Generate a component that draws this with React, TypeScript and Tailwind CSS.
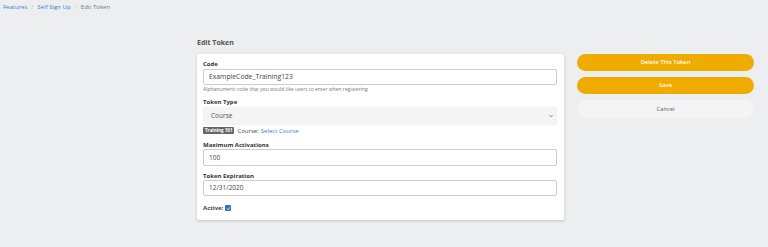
export default function App() {
  return (
    <div className="w-[768px] h-[247px] bg-[#edeef0] font-['Open_Sans',sans-serif] text-[#333] overflow-hidden">
      {/* Breadcrumb */}
      <div className="flex items-center gap-[4px] pl-[3px] pt-[1px] h-[12px] text-[6px] leading-none">
        <span className="text-[#3a7bd5]">Features</span>
        <span className="text-[#bbb]">/</span>
        <span className="text-[#3a7bd5]">Self Sign Up</span>
        <span className="text-[#bbb]">/</span>
        <span className="text-[#777]">Edit Token</span>
      </div>

      <div className="flex pl-[197px] pt-[26px] gap-[13px]">
        {/* Form column */}
        <div className="w-[367px] flex flex-col">
          <h2 className="text-[7px] font-bold text-[#555] leading-none h-[16px] pt-[1px]">Edit Token</h2>
          <div className="bg-white rounded-[2px] shadow-[0_1px_3px_rgba(0,0,0,0.18)] pl-[6px] pr-[7px] pt-[5px] h-[166px]">
            <label className="block text-[6px] font-bold leading-none h-[10px] pt-[2px]">Code</label>
            <div className="h-[16px] border border-[#ccc] rounded-[2px] flex items-center px-[5px] text-[6.8px] text-[#444]">
              ExampleCode_Training123
            </div>
            <p className="text-[5px] text-[#777] leading-none mt-[2px] h-[10px]">
              Alphanumeric code that you would like users to enter when registering
            </p>

            <label className="block text-[6px] font-bold leading-none h-[10px] pt-[2px]">Token Type</label>
            <div className="h-[18px] bg-[#f4f4f4] rounded-[2px] flex items-center justify-between pl-[8px] pr-[3px] text-[6.5px] text-[#555]">
              <span>Course</span>
              <svg width="6" height="6" viewBox="0 0 24 24" fill="none" stroke="#555" strokeWidth="3">
                <path d="M6 9l6 6 6-6" />
              </svg>
            </div>
            <div className="flex items-center gap-[3px] mt-[2px] h-[7px] text-[6px] leading-none">
              <span className="bg-[#666] text-white text-[4.5px] font-bold h-[7px] px-[2px] flex items-center rounded-[1px]">
                Training 101
              </span>
              <span className="text-[#444]">Course:</span>
              <span className="text-[#3a7bd5] -ml-[1px]">Select Course</span>
            </div>

            <label className="block text-[6px] font-bold leading-none mt-[6px] h-[9px] pt-[2px]">Maximum Activations</label>
            <div className="h-[17px] border border-[#ccc] rounded-[2px] flex items-center px-[5px] text-[6.5px] text-[#444]">
              100
            </div>

            <label className="block text-[6px] font-bold leading-none mt-[5px] h-[9px] pt-[2px]">Token Expiration</label>
            <div className="h-[16px] border border-[#ccc] rounded-[2px] flex items-center px-[5px] text-[6.5px] text-[#444]">
              12/31/2020
            </div>

            <div className="flex items-center gap-[2px] mt-[9px] text-[6px] font-bold text-[#444] leading-none">
              <span>Active:</span>
              <span className="w-[6px] h-[6px] bg-[#2a6fdb] rounded-[1px] flex items-center justify-center">
                <svg width="5" height="5" viewBox="0 0 10 10" fill="none" stroke="white" strokeWidth="1.8">
                  <path d="M2 5.2l2 2 4-4.5" />
                </svg>
              </span>
            </div>
          </div>
        </div>

        {/* Actions */}
        <div className="w-[177px] flex flex-col gap-[6px] pt-[16px]">
          <button className="h-[17px] rounded-full bg-[#f0ab00] text-white text-[5.8px] font-semibold">
            Delete This Token
          </button>
          <button className="h-[17px] rounded-full bg-[#f0ab00] text-white text-[5.8px] font-semibold">
            Save
          </button>
          <button className="h-[18px] rounded-full bg-[#f4f4f4] text-[#555] text-[5.8px]">
            Cancel
          </button>
        </div>
      </div>
    </div>
  );
}
